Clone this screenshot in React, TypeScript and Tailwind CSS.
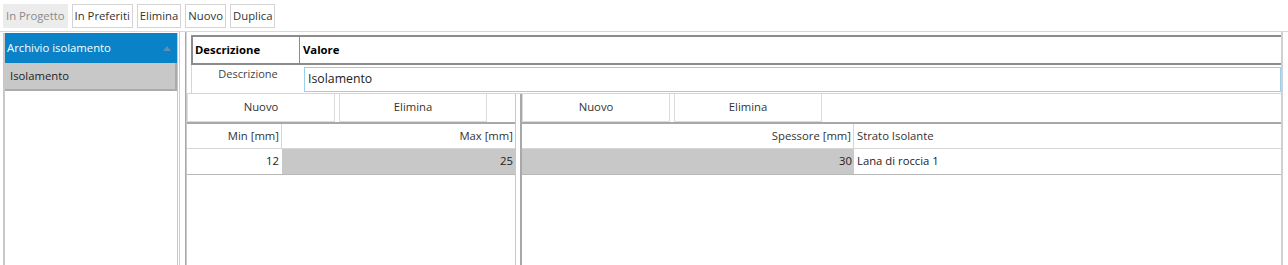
const font = { fontFamily: '"Open Sans", "Noto Sans", sans-serif' };

const ToolButton = ({ label, disabled }: { label: string; disabled?: boolean }) => (
  <div
    className={
      disabled
        ? "h-[24px] px-[2px] flex items-center bg-[#ececec] border border-[#ececec] text-[#8a8a8a]"
        : "h-[24px] px-[2px] flex items-center bg-white border border-[#d4d4d4] text-[#333]"
    }
  >
    {label}
  </div>
);

const PanelButtons = () => (
  <div className="h-[28px] flex items-stretch gap-[4px]">
    <div className="w-[148px] flex items-center justify-center border border-t-0 border-[#dcdcdc] text-[#333]">Nuovo</div>
    <div className="w-[148px] flex items-center justify-center border border-t-0 border-[#dcdcdc] text-[#333]">Elimina</div>
  </div>
);

const App = () => {
  return (
    <div className="w-[1288px] h-[265px] bg-white overflow-hidden text-[11.3px] text-[#222]" style={font}>
      {/* toolbar */}
      <div className="h-[31px] flex items-start gap-[4px] pl-[3px] pt-[4px]">
        <ToolButton label="In Progetto" disabled />
        <ToolButton label="In Preferiti" />
        <ToolButton label="Elimina" />
        <ToolButton label="Nuovo" />
        <ToolButton label="Duplica" />
      </div>

      <div className="flex h-[234px] border-t border-[#d8d8d8]">
        {/* left archive panel */}
        <div className="ml-[3px] mt-[1px] w-[175px] flex flex-col border-l-2 border-r border-[#c8c8c8]">
          <div className="h-[30px] bg-[#0a82c8] text-white flex items-center justify-between pl-[2px] pr-[6px]">
            <span>Archivio isolamento</span>
            <svg width="8" height="5" viewBox="0 0 8 5">
              <path d="M0 5 L4 0 L8 5 Z" fill="#5c8fb4" />
            </svg>
          </div>
          <div className="h-[28px] bg-[#c8c8c8] border-r-2 border-b-2 border-[#ababab] flex items-center pl-[5px] text-[#222]">
            Isolamento
          </div>
        </div>

        {/* splitter */}
        <div className="w-[8px] flex">
          <div className="ml-[1px] w-[1px] bg-[#d0d0d0]" />
          <div className="ml-[5px] w-[1px] bg-[#a8a8a8]" />
        </div>

        {/* right panel */}
        <div className="w-[1097px] flex flex-col border-r-2 border-[#d0d0d0]">
          <div className="h-[61px] flex flex-col pt-[3px] pl-[4px] border-l border-[#d6d6d6]">
            <div className="h-[30px] flex border-2 border-[#8c8c8c] border-r-0 font-bold text-black">
              <div className="w-[107px] flex items-center pl-[2px] border-r border-[#8c8c8c]">Descrizione</div>
              <div className="flex-1 flex items-center pl-[3px]">Valore</div>
            </div>
            <div className="h-[28px] flex border-l border-[#d6d6d6]">
              <div className="w-[112px] flex justify-center pt-[1px] text-[11px] text-[#444]">Descrizione</div>
              <div className="flex-1 mt-[2px] h-[25px] border border-[#99cfee] flex items-center pl-[3px] text-[12.3px] text-[#222]">
                Isolamento
              </div>
            </div>
          </div>

          <div className="flex-1 flex border-t border-[#d6d6d6]">
            {/* left sub panel */}
            <div className="w-[329px] flex flex-col border-l border-[#c8c8c8]">
              <PanelButtons />
              <div className="h-[26px] flex border-t-2 border-[#a8a8a8] text-[#333]">
                <div className="w-[95px] flex items-center justify-end pr-[2px] border-r border-[#d6d6d6]">Min [mm]</div>
                <div className="flex-1 flex items-center justify-end pr-[2px]">Max [mm]</div>
              </div>
              <div className="h-[27px] flex border-t border-[#d6d6d6] border-b border-b-[#b8b8b8]">
                <div className="w-[95px] flex items-center justify-end pr-[3px]">12</div>
                <div className="flex-1 flex items-center justify-end pr-[2px] bg-[#c8c8c8]">25</div>
              </div>
            </div>

            {/* splitter */}
            <div className="w-[7px] flex">
              <div className="w-[1px] bg-[#c8c8c8]" />
              <div className="ml-[4px] w-[2px] bg-[#a8a8a8]" />
            </div>

            {/* right sub panel */}
            <div className="flex-1 flex flex-col">
              <PanelButtons />
              <div className="h-[26px] flex border-t-2 border-[#a8a8a8] text-[#333]">
                <div className="w-[332px] flex items-center justify-end pr-[2px] border-r border-[#d6d6d6]">Spessore [mm]</div>
                <div className="flex-1 flex items-center pl-[3px]">Strato Isolante</div>
              </div>
              <div className="h-[27px] flex border-t border-[#d6d6d6] border-b border-b-[#b8b8b8]">
                <div className="w-[332px] flex items-center justify-end pr-[2px] bg-[#c8c8c8]">30</div>
                <div className="flex-1 flex items-center pl-[3px]">Lana di roccia 1</div>
              </div>
            </div>
          </div>
        </div>
      </div>
    </div>
  );
};

export default App;
